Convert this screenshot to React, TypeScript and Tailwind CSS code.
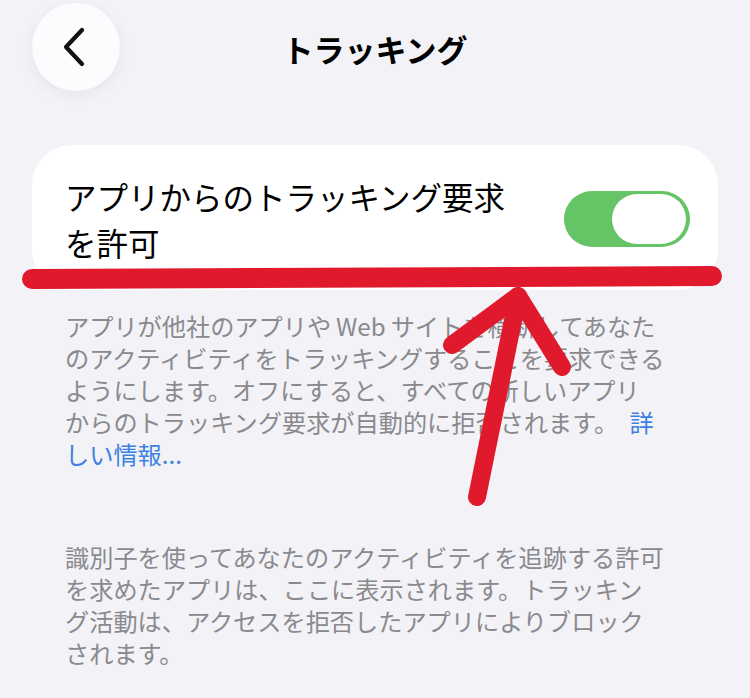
import React, { useState } from 'react';

const jp = { fontFamily: '"Noto Sans CJK JP", "Noto Sans", sans-serif' };

function Toggle({ on, onChange }: { on: boolean; onChange: (v: boolean) => void }) {
  return (
    <button
      onClick={() => onChange(!on)}
      className={`relative h-[56px] w-[126px] shrink-0 rounded-full ${on ? 'bg-[#65c466]' : 'bg-[#e3e3e8]'}`}
    >
      <span
        className={`absolute top-[3px] h-[50px] w-[74px] rounded-full bg-white ${on ? 'right-[4px]' : 'left-[4px]'}`}
      />
    </button>
  );
}

export default function App() {
  const [allow, setAllow] = useState(true);

  return (
    <div className="relative h-[698px] w-[750px] overflow-hidden bg-[#f2f2f7]" style={jp}>
      {/* ナビゲーションバー */}
      <header className="grid h-[91px] grid-cols-[1fr_auto_1fr] items-center px-[32px] pt-[3px]">
        <button className="flex h-[88px] w-[88px] items-center justify-center rounded-full bg-[#fcfcfe] shadow-[0_4px_16px_rgba(0,0,0,0.06)]">
          <svg width="26" height="40" viewBox="0 0 26 40" fill="none" className="-ml-[4px]">
            <path d="M21 3 L5 20 L21 37" stroke="#111" strokeWidth="4.2" strokeLinecap="round" strokeLinejoin="round" />
          </svg>
        </button>
        <h1 className="pt-[2px] text-[31px] font-semibold leading-none text-black">トラッキング</h1>
        <div />
      </header>

      {/* トグル */}
      <section className="mx-[32px] mt-[54px] flex items-center justify-between rounded-[40px] bg-white pb-[25px] pl-[33px] pr-[28px] pt-[28px]">
        <p className="max-w-[470px] text-[31.5px] leading-[46px] text-black">
          アプリからのトラッキング要求を許可
        </p>
        <Toggle on={allow} onChange={setAllow} />
      </section>

      {/* 説明 */}
      <div className="mt-[20px] pl-[65px] text-[24.2px] leading-[32px] text-[#8a8a8e]">
        <p className="whitespace-nowrap">
          アプリが他社のアプリや<span className="mx-[5px]">Web</span>サイトを横断してあなた
          <br />
          のアクティビティをトラッキングすることを要求できる
          <br />
          ようにします。オフにすると、すべての新しいアプリ
          <br />
          からのトラッキング要求が自動的に拒否されます。{' '}
          <a className="ml-[6px] text-[#3d82e0]">
            詳<br />
            しい情報...
          </a>
        </p>
        <p className="mt-[71px] whitespace-nowrap">
          識別子を使ってあなたのアクティビティを追跡する許可
          <br />
          を求めたアプリは、ここに表示されます。トラッキン
          <br />
          グ活動は、アクセスを拒否したアプリによりブロック
          <br />
          されます。
        </p>
      </div>

      {/* 手書きの赤線と矢印 */}
      <svg className="pointer-events-none absolute inset-0" width="750" height="698" viewBox="0 0 750 698">
        <g stroke="#e0192d" strokeLinecap="round" strokeLinejoin="round" fill="none">
          <path d="M32 279 L712 276" strokeWidth="20" />
          <path d="M477 497 L518 296" strokeWidth="18" />
          <path d="M452 345 L518 296 L562 367" strokeWidth="18" />
        </g>
      </svg>
    </div>
  );
}
